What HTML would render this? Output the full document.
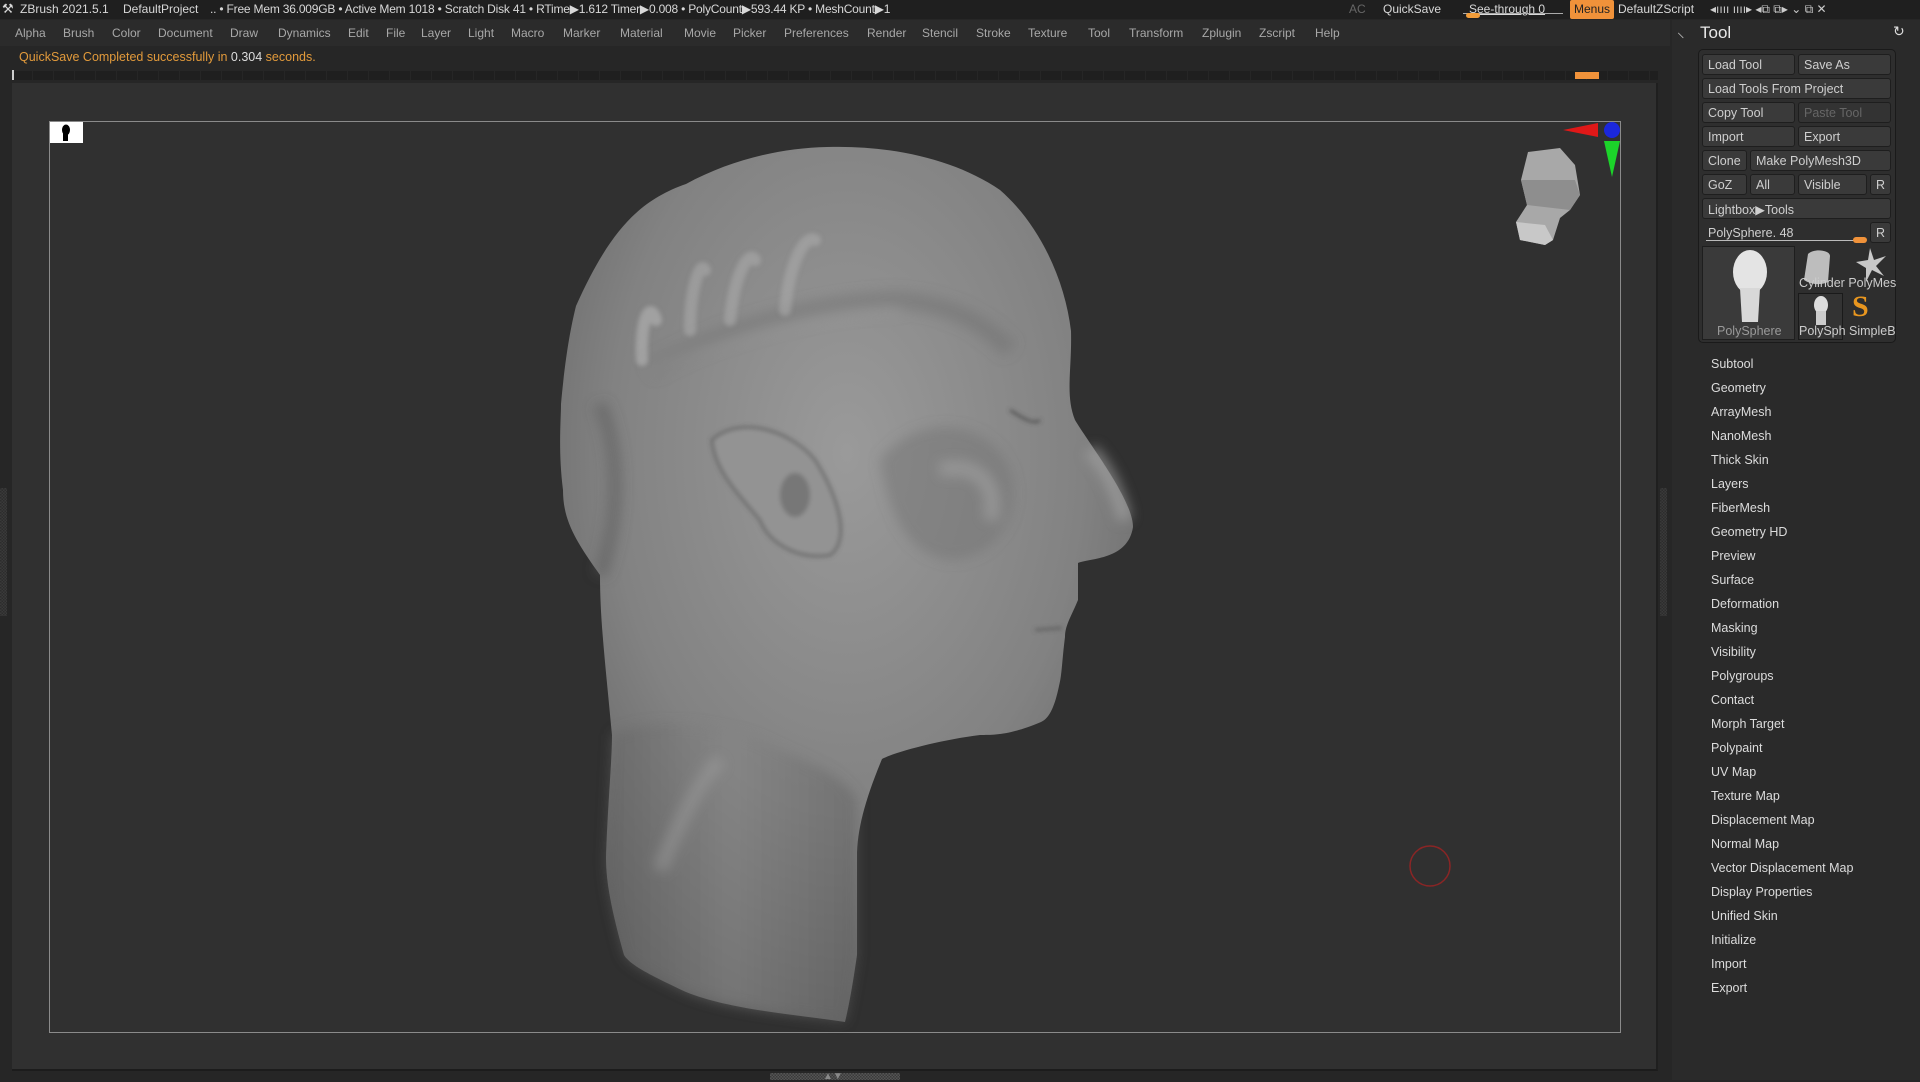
<!DOCTYPE html>
<html><head><meta charset="utf-8"><style>
*{margin:0;padding:0;box-sizing:border-box}
body{width:1920px;height:1080px;background:#262626;font-family:"Liberation Sans",sans-serif;color:#d8d8d8;position:relative;overflow:hidden;font-size:13px}
.abs{position:absolute}
#title{left:0;top:0;width:1920px;height:19px;background:#1f1f1f;font-size:12px;white-space:nowrap}
#title span{position:absolute;top:2px}
#menu{left:0;top:20px;width:1670px;height:26px;background:#2b2b2b}
#menu span{position:absolute;top:6px;color:#a8a8a8;font-size:12px}
#note{left:19px;top:50px;color:#e29a3b;font-size:12.5px}
#ruler{left:12px;top:71px;width:1646px;height:9px;background:repeating-linear-gradient(90deg,#1f1f1f 0 20px,#262626 20px 21px)}
#canvas{left:12px;top:83px;width:1646px;height:988px;background:#303030;border-bottom:2px solid #1c1c1c;border-right:2px solid #1f1f1f}
#doc{left:49px;top:121px;width:1572px;height:912px;border:1.5px solid #8a8a8a}
#panel{left:1672px;top:20px;width:248px;height:1060px;background:#2a2a2a}
.btn{position:absolute;height:21px;background:#3a3a3a;border:1px solid #1e1e1e;border-radius:3px;color:#cfcfcf;font-size:12.5px;padding:3px 0 0 5px;white-space:nowrap;overflow:hidden}
.item{position:absolute;left:1711px;color:#dcdcdc;font-size:12.5px}
</style></head><body>
<div id="title" class="abs">
<span style="left:2px;top:1px;font-size:13px">⚒</span>
<span style="left:20px">ZBrush 2021.5.1</span>
<span style="left:123px">DefaultProject</span>
<span style="left:210px;letter-spacing:-0.2px">.. • Free Mem 36.009GB • Active Mem 1018 • Scratch Disk 41 •  RTime▶1.612 Timer▶0.008 • PolyCount▶593.44 KP  • MeshCount▶1</span>
<span style="left:1349px;color:#666">AC</span>
<span style="left:1383px">QuickSave</span>
<span style="left:1469px;text-decoration:underline">See-through  0</span>
<span style="left:1463px;top:13px;width:100px;height:1px;background:#aaa"></span>
<span style="left:1466px;top:13px;width:14px;height:5px;background:#f29d3a;border-radius:3px"></span>
<span style="left:1570px;top:0;height:19px;width:44px;background:#f0923a;color:#222;padding:2px 0 0 4px;border-radius:2px">Menus</span>
<span style="left:1618px">DefaultZScript</span>
<span style="left:1710px;color:#ccc">◂ıııı  ıııı▸  ◂⧉  ⧉▸   ⌄   ⧉   ✕</span>
</div>
<div id="menu" class="abs">
<span style="left:15px">Alpha</span><span style="left:63px">Brush</span><span style="left:112px">Color</span><span style="left:158px">Document</span><span style="left:230px">Draw</span><span style="left:278px">Dynamics</span><span style="left:348px">Edit</span><span style="left:386px">File</span><span style="left:421px">Layer</span><span style="left:468px">Light</span><span style="left:511px">Macro</span><span style="left:563px">Marker</span><span style="left:620px">Material</span><span style="left:684px">Movie</span><span style="left:733px">Picker</span><span style="left:784px">Preferences</span><span style="left:867px">Render</span><span style="left:922px">Stencil</span><span style="left:976px">Stroke</span><span style="left:1028px">Texture</span><span style="left:1088px">Tool</span><span style="left:1129px">Transform</span><span style="left:1202px">Zplugin</span><span style="left:1259px">Zscript</span><span style="left:1315px">Help</span>
</div>
<div id="note" class="abs">QuickSave Completed successfully in <span style="color:#ddd">0.304</span> seconds.</div>
<div id="ruler" class="abs"></div>
<div class="abs" style="left:1575px;top:72px;width:24px;height:7px;background:#f0923a"></div>
<div class="abs" style="left:12px;top:70px;width:2px;height:10px;background:#ccc"></div>
<div id="canvas" class="abs"></div>
<div class="abs" style="left:0;top:488px;width:7px;height:128px;background:repeating-conic-gradient(#3a3a3a 0 25%,#2c2c2c 0 50%) 0 0/3px 3px"></div>
<div class="abs" style="left:1660px;top:488px;width:7px;height:128px;background:repeating-conic-gradient(#3a3a3a 0 25%,#2c2c2c 0 50%) 0 0/3px 3px"></div>
<div class="abs" style="left:770px;top:1073px;width:130px;height:7px;background:repeating-conic-gradient(#555 0 25%,#3a3a3a 0 50%) 0 0/3px 3px"></div>
<div class="abs" style="left:823px;top:1071px;color:#888;font-size:10px">▲▼</div>
<div id="doc" class="abs"></div>
<div class="abs" style="left:50px;top:122px;width:33px;height:21px;background:#fff"></div>
<svg class="abs" style="left:50px;top:122px" width="33" height="21"><ellipse cx="16" cy="8" rx="4" ry="5.5" fill="#000"/><rect x="13" y="11" width="5" height="8" fill="#000"/></svg>
<svg class="abs" style="left:0;top:0" width="1670" height="1075">
<defs>
<radialGradient id="hg" cx="0.5" cy="0.35" r="0.75">
<stop offset="0" stop-color="#9a9a9a"/><stop offset="0.55" stop-color="#828282"/><stop offset="1" stop-color="#585858"/>
</radialGradient>
<linearGradient id="ng" x1="0" y1="0" x2="1" y2="0"><stop offset="0" stop-color="#626262"/><stop offset="0.5" stop-color="#888"/><stop offset="1" stop-color="#606060"/></linearGradient>
<filter id="bl"><feGaussianBlur stdDeviation="6"/></filter>
<filter id="bl2"><feGaussianBlur stdDeviation="2"/></filter>
</defs>
<path d="M827,147 C890,145 955,159 1000,190 C1040,225 1065,280 1071,331 C1072,370 1065,395 1075,420 C1090,445 1133,500 1133,527 C1128,560 1090,558 1078,563 L1078,600 C1072,615 1065,625 1065,637 C1062,660 1062,675 1059,686 C1055,705 1050,718 1041,722 C1010,735 995,735 980,735 C940,740 895,752 882,759 C865,800 857,830 857,857 L857,955 C852,990 848,1010 845,1022 C800,1015 730,1010 686,992 C650,975 630,965 624,955 C610,905 606,880 606,857 C608,800 612,760 612,735 C605,660 600,620 600,575 C575,540 563,520 563,490 C558,450 561,420 561,404 C565,360 570,330 576,306 C610,230 640,200 686,184 C730,160 780,148 827,147Z" fill="url(#hg)"/>
<g filter="url(#bl)">
<path d="M612,735 C640,720 700,720 760,740 C800,760 840,770 857,800 L857,955 C852,990 848,1010 845,1022 C800,1015 730,1010 686,992 C650,975 630,965 624,955 C610,905 606,880 606,857Z" fill="url(#ng)" opacity="0.5"/>
<path d="M650,370 C720,330 820,300 900,300 C960,305 990,330 1010,350" stroke="#707070" stroke-width="18" fill="none" opacity="0.5"/>
<path d="M650,370 C720,340 820,310 900,310" stroke="#a0a0a0" stroke-width="6" fill="none" opacity="0.5"/>
<path d="M880,460 C920,410 990,420 1010,470 C1025,520 990,560 950,560 C910,555 890,520 880,460Z" fill="#737373" opacity="0.5"/>
<path d="M940,470 C980,460 1000,490 990,520" stroke="#a4a4a4" stroke-width="14" fill="none" opacity="0.6"/>
<path d="M1090,450 C1110,470 1120,500 1125,520" stroke="#a8a8a8" stroke-width="14" fill="none" opacity="0.6"/>
<path d="M600,575 C620,520 620,450 600,404" stroke="#5a5a5a" stroke-width="14" fill="none" opacity="0.5"/>
<path d="M660,870 C680,820 700,780 720,760" stroke="#a0a0a0" stroke-width="14" fill="none" opacity="0.5"/>
</g>
<g filter="url(#bl2)">
<path d="M642,360 C640,320 650,300 656,320" stroke="#b4b4b4" stroke-width="12" fill="none" stroke-linecap="round" opacity="0.6"/>
<path d="M690,330 C690,290 700,260 705,270" stroke="#b0b0b0" stroke-width="12" fill="none" stroke-linecap="round" opacity="0.5"/>
<path d="M730,320 C735,270 750,250 755,260" stroke="#b0b0b0" stroke-width="12" fill="none" stroke-linecap="round" opacity="0.5"/>
<path d="M785,310 C790,260 805,235 815,240" stroke="#b0b0b0" stroke-width="12" fill="none" stroke-linecap="round" opacity="0.5"/>
<path d="M712,440 C740,415 790,430 815,460 C840,500 850,540 830,555 C800,560 770,545 760,520 C735,490 715,470 712,440Z" fill="#939393" stroke="#555" stroke-width="2"/>
<ellipse cx="795" cy="495" rx="15" ry="22" fill="#777"/>
<path d="M1010,410 C1025,420 1035,425 1040,420" stroke="#444" stroke-width="2" fill="none"/>
<path d="M1035,630 L1062,628" stroke="#555" stroke-width="2"/>
</g>
<!-- mini head -->
<path d="M1528,152 L1560,148 L1575,165 L1580,195 L1570,210 L1560,218 L1553,240 L1545,245 L1520,240 L1516,222 L1527,205 L1521,180Z" fill="#a8a8a8"/>
<path d="M1521,180 L1575,180 L1580,195 L1570,210 L1527,205Z" fill="#8e8e8e"/>
<path d="M1516,222 L1545,225 L1553,240 L1545,245 L1520,240Z" fill="#c8c8c8"/>
<path d="M1563,130 L1598,123 L1598,137Z" fill="#e01818"/>
<circle cx="1612" cy="130" r="8" fill="#1b27dc"/>
<path d="M1604,141 L1620,141 L1612,177Z" fill="#1cd42a"/>
<circle cx="1430" cy="866" r="20" fill="none" stroke="#8a2525" stroke-width="1.5"/>
</svg>
<div id="panel" class="abs"></div>
<div class="abs" style="left:1677px;top:22px;font-size:15px;color:#bbb">⸜</div>
<div class="abs" style="left:1700px;top:23px;font-size:17px;color:#e8e8e8">Tool</div>
<div class="abs" style="left:1893px;top:23px;font-size:14px;color:#ddd">↻</div>
<div class="abs" style="left:1698px;top:49px;width:198px;height:294px;border:1px solid #1a1a1a;border-radius:5px;background:#2e2e2e"></div>
<div class="btn" style="left:1702px;top:54px;width:93px">Load Tool</div>
<div class="btn" style="left:1798px;top:54px;width:93px">Save As</div>
<div class="btn" style="left:1702px;top:78px;width:189px">Load Tools From Project</div>
<div class="btn" style="left:1702px;top:102px;width:93px">Copy Tool</div>
<div class="btn" style="left:1798px;top:102px;width:93px;color:#666;background:#333">Paste Tool</div>
<div class="btn" style="left:1702px;top:126px;width:93px">Import</div>
<div class="btn" style="left:1798px;top:126px;width:93px">Export</div>
<div class="btn" style="left:1702px;top:150px;width:45px">Clone</div>
<div class="btn" style="left:1750px;top:150px;width:141px">Make PolyMesh3D</div>
<div class="btn" style="left:1702px;top:174px;width:45px">GoZ</div>
<div class="btn" style="left:1750px;top:174px;width:45px">All</div>
<div class="btn" style="left:1798px;top:174px;width:69px">Visible</div>
<div class="btn" style="left:1870px;top:174px;width:21px">R</div>
<div class="btn" style="left:1702px;top:198px;width:189px">Lightbox▶Tools</div>
<div class="btn" style="left:1702px;top:222px;width:165px;background:#2e2e2e;border-color:#2e2e2e">PolySphere. 48</div>
<div class="abs" style="left:1706px;top:240px;width:160px;height:1px;background:#bbb"></div>
<div class="abs" style="left:1853px;top:237px;width:14px;height:6px;background:#f0923a;border-radius:3px"></div>
<div class="btn" style="left:1870px;top:222px;width:21px">R</div>
<div class="abs" style="left:1702px;top:246px;width:93px;height:94px;background:#3a3a3a;border:1px solid #1e1e1e"></div>
<svg class="abs" style="left:1720px;top:248px" width="60" height="76"><ellipse cx="30" cy="24" rx="17" ry="22" fill="#e4e4e4"/><path d="M20,40 L40,40 L38,74 L22,74Z" fill="#d8d8d8"/></svg>
<div class="abs" style="left:1717px;top:324px;color:#999;font-size:12.5px">PolySphere</div>
<svg class="abs" style="left:1800px;top:246px" width="90" height="40"><path d="M8,8 C14,2 30,4 30,10 L28,36 C20,40 10,38 4,34Z" fill="#bdbdbd"/><path d="M70,2 L74,14 L86,10 L76,20 L84,30 L72,24 L66,36 L66,22 L56,16 L68,14Z" fill="#c8c8c8"/></svg>
<div class="abs" style="left:1799px;top:276px;color:#ccc;font-size:12.5px">Cylinder PolyMes</div>
<div class="abs" style="left:1798px;top:293px;width:45px;height:47px;border:1px solid #1a1a1a;background:#333"></div>
<svg class="abs" style="left:1808px;top:295px" width="26" height="32"><ellipse cx="13" cy="10" rx="7" ry="9" fill="#ddd"/><rect x="8" y="16" width="10" height="14" fill="#ccc"/></svg>
<div class="abs" style="left:1852px;top:290px;font-size:30px;color:#e8961f;font-weight:bold;font-family:'Liberation Serif',serif">S</div>
<div class="abs" style="left:1799px;top:324px;color:#ccc;font-size:12.5px">PolySph SimpleB</div>
<div class="item" style="top:357px">Subtool</div>
<div class="item" style="top:381px">Geometry</div>
<div class="item" style="top:405px">ArrayMesh</div>
<div class="item" style="top:429px">NanoMesh</div>
<div class="item" style="top:453px">Thick Skin</div>
<div class="item" style="top:477px">Layers</div>
<div class="item" style="top:501px">FiberMesh</div>
<div class="item" style="top:525px">Geometry HD</div>
<div class="item" style="top:549px">Preview</div>
<div class="item" style="top:573px">Surface</div>
<div class="item" style="top:597px">Deformation</div>
<div class="item" style="top:621px">Masking</div>
<div class="item" style="top:645px">Visibility</div>
<div class="item" style="top:669px">Polygroups</div>
<div class="item" style="top:693px">Contact</div>
<div class="item" style="top:717px">Morph Target</div>
<div class="item" style="top:741px">Polypaint</div>
<div class="item" style="top:765px">UV Map</div>
<div class="item" style="top:789px">Texture Map</div>
<div class="item" style="top:813px">Displacement Map</div>
<div class="item" style="top:837px">Normal Map</div>
<div class="item" style="top:861px">Vector Displacement Map</div>
<div class="item" style="top:885px">Display Properties</div>
<div class="item" style="top:909px">Unified Skin</div>
<div class="item" style="top:933px">Initialize</div>
<div class="item" style="top:957px">Import</div>
<div class="item" style="top:981px">Export</div>
</body></html>
